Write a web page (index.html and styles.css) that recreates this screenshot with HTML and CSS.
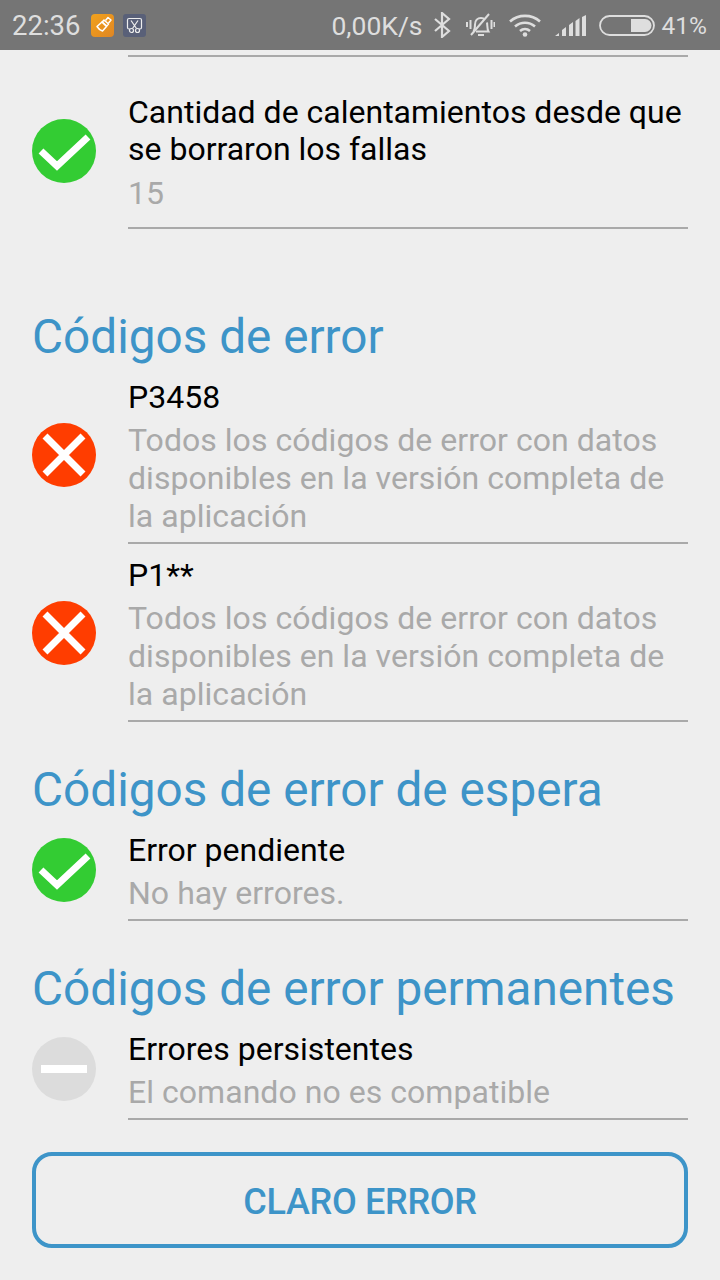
FILE: index.html
```html
<!DOCTYPE html>
<html lang="es">
<head>
    <meta charset="UTF-8">
    <meta name="viewport" content="width=device-width, initial-scale=1.0">
    <title>Códigos de error</title>
    <link rel="stylesheet" href="styles.css">
</head>
<body>
    <div class="status-bar">
        <span class="clock">22:36</span>
        <svg class="notif notif-orange" viewBox="0 0 23 23">
            <defs>
                <linearGradient id="orange" x1="0" y1="0" x2="1" y2="1">
                    <stop offset="0" stop-color="#f2a21c"/>
                    <stop offset="1" stop-color="#e08623"/>
                </linearGradient>
            </defs>
            <rect x="0" y="0" width="23" height="23" rx="4" fill="url(#orange)"/>
            <g fill="none" stroke="#fff" stroke-width="1.5" stroke-linejoin="round">
                <path d="M13 6l4.500 4-1.800 2-4.500-4z"/>
                <path d="M11 8l4.500 4.500-4 4.500c-1.500-.5-4-2-5.500-4.500z"/>
                <path d="M14.500 6.500l2.500-3 3 2.500-2.500 3"/>
            </g>
        </svg>
        <svg class="notif notif-slate" viewBox="0 0 23 23">
            <rect x="0" y="0" width="23" height="23" rx="3" fill="#596078"/>
            <g fill="none" stroke="#eee" stroke-width="1.200">
                <path d="M7 15H6a1.500 1.500 0 0 1-1.500-1.500V6A1.500 1.500 0 0 1 6 4.500h11A1.500 1.500 0 0 1 18.500 6v7.500A1.500 1.500 0 0 1 17 15h-1"/>
                <path d="M8 6.500l5.500 8M15 6.500l-5.500 8"/>
                <circle cx="8.500" cy="16.500" r="2"/>
                <circle cx="14.500" cy="16.500" r="2"/>
            </g>
        </svg>
        <span class="status-right">
            <span class="speed">0,00K/s</span>
            <svg class="ic-bt" width="18" height="26" viewBox="0 0 18 26">
                <path d="M2 7l14 12-7 6V1l7 6L2 19" fill="none" stroke="#dedede" stroke-width="2.200"/>
            </svg>
            <svg class="ic-mute" width="30" height="26" viewBox="0 0 30 26">
                <g fill="none" stroke="#dedede" stroke-width="2">
                    <path d="M8.500 19.500c1.500-2 1.500-4 1.500-7 0-4 2.500-6.500 6-6.500 1.500 0 3 .5 4 1.500M22 10.500c.5 3 0 6.500 1.500 9H11"/>
                    <path d="M6 23L24 2"/>
                    <path d="M13 23h6"/>
                    <path d="M5.500 8v9M2 10v5M26.500 8v9"/>
                </g>
                <path d="M28.500 10h1.500v5h-1.500z" fill="#dedede"/>
            </svg>
            <svg class="ic-wifi" width="32" height="24" viewBox="0 0 32 24">
                <g fill="none" stroke="#dedede" stroke-width="2.600">
                    <path d="M1 8.500C9.500 1 22.500 1 31 8.500"/>
                    <path d="M6 13.500c6-5 14-5 20 0"/>
                    <path d="M11 18c3-2.500 7-2.500 10 0"/>
                </g>
                <circle cx="16" cy="21.500" r="2.300" fill="#dedede"/>
            </svg>
            <svg class="ic-signal" width="31" height="21" viewBox="0 0 31 21">
                <path d="M0 21l4-3v3zM7 21v-6l4-3v9zM14 21V10l4-3v14zM20.500 21V6l4-3v18zM27 21V2l4-2v21z" fill="#dedede"/>
            </svg>
            <svg class="ic-battery" width="56" height="21" viewBox="0 0 56 21">
                <rect x="1" y="1" width="54" height="19" rx="9.500" fill="none" stroke="#dedede" stroke-width="1.800"/>
                <path d="M32 4h14a6.500 6.500 0 0 1 0 13H32z" fill="#dedede"/>
            </svg>
            <span class="battery-pct">41%</span>
        </span>
    </div>

    <div class="content">
        <div class="row-tail"></div>

        <div class="row row-first">
            <svg class="state" viewBox="0 0 64 64">
                <circle cx="32" cy="32" r="32" fill="#33cc33"/>
                <path d="M9 32l16 15 31-29" fill="none" stroke="#fff" stroke-width="7"/>
            </svg>
            <div class="row-text">
                <div class="row-title">Cantidad de calentamientos desde que se borraron los fallas</div>
                <div class="row-value">15</div>
            </div>
        </div>

        <h2 class="section section-first">Códigos de error</h2>
        <div class="row">
            <svg class="state" viewBox="0 0 64 64">
                <circle cx="32" cy="32" r="32" fill="#ff3d00"/>
                <path d="M13 13l38 38M51 13L13 51" fill="none" stroke="#fff" stroke-width="7"/>
            </svg>
            <div class="row-text">
                <div class="row-title">P3458</div>
                <div class="row-value">Todos los códigos de error con datos disponibles en la versión completa de la aplicación</div>
            </div>
        </div>
        <div class="row row-next">
            <svg class="state" viewBox="0 0 64 64">
                <circle cx="32" cy="32" r="32" fill="#ff3d00"/>
                <path d="M13 13l38 38M51 13L13 51" fill="none" stroke="#fff" stroke-width="7"/>
            </svg>
            <div class="row-text">
                <div class="row-title">P1**</div>
                <div class="row-value">Todos los códigos de error con datos disponibles en la versión completa de la aplicación</div>
            </div>
        </div>

        <h2 class="section">Códigos de error de espera</h2>
        <div class="row">
            <svg class="state" viewBox="0 0 64 64">
                <circle cx="32" cy="32" r="32" fill="#33cc33"/>
                <path d="M9 32l16 15 31-29" fill="none" stroke="#fff" stroke-width="7"/>
            </svg>
            <div class="row-text">
                <div class="row-title">Error pendiente</div>
                <div class="row-value">No hay errores.</div>
            </div>
        </div>

        <h2 class="section">Códigos de error permanentes</h2>
        <div class="row">
            <svg class="state" viewBox="0 0 64 64">
                <circle cx="32" cy="32" r="32" fill="#dcdcdc"/>
                <rect x="9" y="28" width="46" height="8" fill="#fff"/>
            </svg>
            <div class="row-text">
                <div class="row-title">Errores persistentes</div>
                <div class="row-value">El comando no es compatible</div>
            </div>
        </div>

        <button class="clear-btn">CLARO ERROR</button>
    </div>
</body>
</html>
```

FILE: styles.css
```css
html, body {
    margin: 0;
    padding: 0;
}
body {
    width: 720px;
    height: 1280px;
    overflow: hidden;
    background-color: #eeeeee;
    font-family: Roboto, sans-serif;
}
.status-bar {
    display: flex;
    align-items: center;
    height: 50px;
    padding: 0 13px 0 12px;
    box-sizing: border-box;
    background-color: #757575;
    color: #dedede;
    font-size: 26.500px;
}
.clock {
    width: 79px;
    font-size: 27.500px;
}
.notif {
    width: 23px;
    height: 23px;
}
.notif-slate {
    margin-left: 9px;
}
.status-right {
    margin-left: auto;
    display: flex;
    align-items: center;
}
.ic-bt {
    margin-left: 10px;
}
.ic-mute {
    margin-left: 14px;
}
.ic-wifi {
    margin-left: 14px;
}
.ic-signal {
    margin-left: 14px;
}
.ic-battery {
    margin-left: 13px;
}
.battery-pct {
    margin-left: 7px;
    font-size: 24.500px;
}
.content {
    padding: 5px 32px 0;
}
.row-tail {
    height: 2px;
    margin-left: 96px;
    background-color: #a9a9a9;
}
.row {
    display: flex;
    align-items: center;
}
.row-first {
    margin-top: 37px;
}
.row-next {
    margin-top: 13px;
}
.state {
    flex: none;
    width: 64px;
    height: 64px;
    margin-right: 32px;
    margin-bottom: 14px;
}
.row-first .state {
    margin-bottom: 21px;
}
.row-text {
    flex: 1;
    padding-bottom: 7px;
    border-bottom: 2px solid #a9a9a9;
}
.row-first .row-text {
    padding-bottom: 15px;
}
.row-title {
    font-size: 32px;
    line-height: 37px;
    color: #000;
}
.row-value {
    margin-top: 5px;
    font-size: 32px;
    line-height: 38px;
    letter-spacing: 0.040px;
    color: #a9a9a9;
}
.row-first .row-value {
    margin-top: 6px;
}
.section {
    margin: 42px 0 16px;
    font-size: 47.700px;
    line-height: 52px;
    font-weight: 400;
    color: #3d94c8;
}
.section-first {
    margin-top: 82px;
}
.clear-btn {
    display: block;
    width: 100%;
    height: 96px;
    margin-top: 32px;
    padding: 4px 0 0;
    border: 4px solid #3d94c8;
    border-radius: 20px;
    background: none;
    font-family: Roboto, sans-serif;
    font-size: 36px;
    font-weight: 500;
    letter-spacing: -0.300px;
    color: #3d94c8;
}
```
